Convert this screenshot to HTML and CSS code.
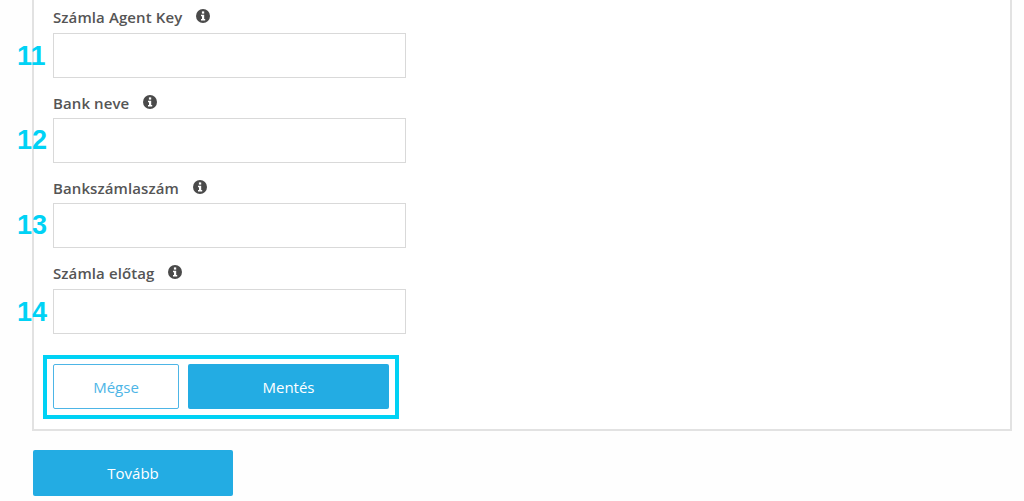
FILE: index.html
```html
<!DOCTYPE html>
<html>
<head>
<meta charset="utf-8">
<link rel="stylesheet" href="styles.css">
</head>
<body>

<div class="pagePanel">

	<div class="fieldRow">
		<label class="fieldLabel">Számla Agent Key
			<svg class="infoIcon" viewBox="0 0 14 14"><circle cx="7" cy="7" r="7" fill="#4a4a4a"/><rect x="5.9" y="2.4" width="2.3" height="2.2" fill="#fff"/><path d="M5 5.7h3.2v4.4h1v1.5H5v-1.5h1V7.2H5z" fill="#fff"/></svg>
		</label>
		<span class="stepNumber">11</span>
		<input class="fieldInput" type="text">
	</div>

	<div class="fieldRow">
		<label class="fieldLabel">Bank neve
			<svg class="infoIcon" viewBox="0 0 14 14"><circle cx="7" cy="7" r="7" fill="#4a4a4a"/><rect x="5.9" y="2.4" width="2.3" height="2.2" fill="#fff"/><path d="M5 5.7h3.2v4.4h1v1.5H5v-1.5h1V7.2H5z" fill="#fff"/></svg>
		</label>
		<span class="stepNumber stepNumberHigh">12</span>
		<input class="fieldInput" type="text">
	</div>

	<div class="fieldRow">
		<label class="fieldLabel">Bankszámlaszám
			<svg class="infoIcon" viewBox="0 0 14 14"><circle cx="7" cy="7" r="7" fill="#4a4a4a"/><rect x="5.9" y="2.4" width="2.3" height="2.2" fill="#fff"/><path d="M5 5.7h3.2v4.4h1v1.5H5v-1.5h1V7.2H5z" fill="#fff"/></svg>
		</label>
		<span class="stepNumber stepNumberHigh">13</span>
		<input class="fieldInput" type="text">
	</div>

	<div class="fieldRow">
		<label class="fieldLabel">Számla előtag
			<svg class="infoIcon" viewBox="0 0 14 14"><circle cx="7" cy="7" r="7" fill="#4a4a4a"/><rect x="5.9" y="2.4" width="2.3" height="2.2" fill="#fff"/><path d="M5 5.7h3.2v4.4h1v1.5H5v-1.5h1V7.2H5z" fill="#fff"/></svg>
		</label>
		<span class="stepNumber">14</span>
		<input class="fieldInput" type="text">
	</div>

	<div class="buttonFrame">
		<button type="button" class="cancelButton">Mégse</button>
		<button type="button" class="saveButton">Mentés</button>
	</div>

</div>

<button type="button" class="nextButton">Tovább</button>

</body>
</html>
```

FILE: styles.css
```css
html, body {
	margin: 0;
	padding: 0;
}

body {
	background: #fefefe;
	font-family: "Open Sans", Arial, sans-serif;
	height: 501px;
	overflow: hidden;
}

.pagePanel {
	box-sizing: border-box;
	width: 980px;
	height: 431px;
	margin-left: 32px;
	padding: 8.4px 0 0 19px;
	background: #fff;
	border: 2px solid #e2e2e2;
	border-top: none;
}

.fieldRow {
	position: relative;
	width: 353px;
	height: 85.2px;
}

.fieldLabel {
	display: flex;
	align-items: center;
	height: 18px;
	margin-bottom: 6.6px;
	font-size: 15px;
	font-weight: 600;
	color: #555;
	letter-spacing: 0.1px;
}

.infoIcon {
	width: 14px;
	height: 14px;
	margin-left: 14px;
	margin-top: -2px;
}

.fieldInput {
	display: block;
	box-sizing: border-box;
	width: 353px;
	height: 45px;
	background: #fff;
	border: 1px solid #d9d9d9;
}

.stepNumber {
	position: absolute;
	left: -36px;
	top: 31px;
	font-family: "Liberation Sans", Arial, sans-serif;
	font-size: 27px;
	line-height: 34px;
	font-weight: 700;
	color: #00d2f5;
}

.stepNumberHigh {
	top: 29px;
}

.buttonFrame {
	display: flex;
	gap: 9px;
	box-sizing: border-box;
	width: 356px;
	height: 64px;
	margin: 6px 0 0 -10px;
	padding: 5px 6px;
	border: 4px solid #00d2f5;
	background: #fff;
}

.cancelButton, .saveButton, .nextButton {
	font-family: "Open Sans", Arial, sans-serif;
	font-size: 15px;
	border-radius: 2px;
	height: 45px;
}

.cancelButton {
	width: 126px;
	background: #fff;
	color: #4db5e6;
	border: 1px solid #4db5e6;
}

.saveButton {
	width: 201px;
	background: #23ace3;
	color: #fff;
	border: none;
}

.nextButton {
	display: block;
	width: 200px;
	height: 46px;
	margin: 19px 0 0 33px;
	background: #23ace3;
	color: #fff;
	border: none;
}
```
